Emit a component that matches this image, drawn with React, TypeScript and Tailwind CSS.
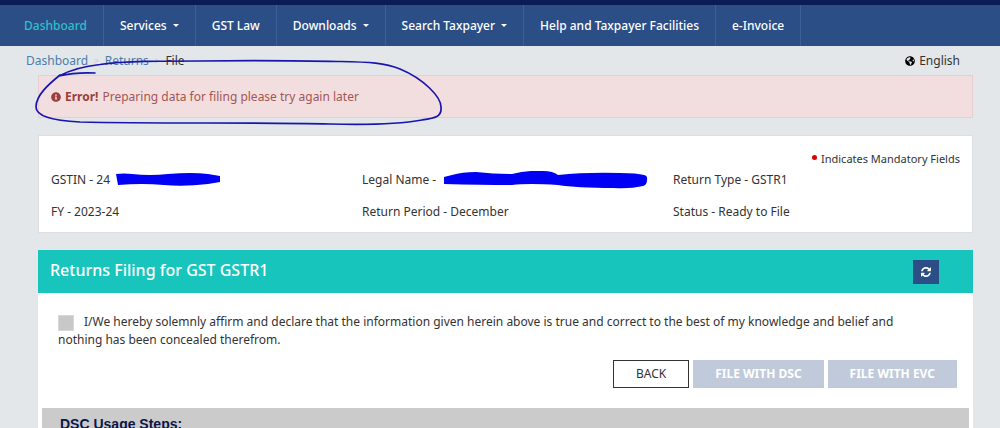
import { FaGlobeAmericas, FaInfoCircle } from "react-icons/fa";

const navItems = [
  { label: "Dashboard", active: true },
  { label: "Services", menu: true },
  { label: "GST Law" },
  { label: "Downloads", menu: true },
  { label: "Search Taxpayer", menu: true },
  { label: "Help and Taxpayer Facilities" },
  { label: "e-Invoice" },
];

function NavBar() {
  return (
    <header className="border-t-[5px] border-[#0b1c57] bg-[#2c4e86]">
      <nav className="flex pl-2 leading-[17px] font-medium text-white">
        {navItems.map((item) => (
          <a
            key={item.label}
            href="#"
            className={`flex items-center gap-1.5 border-r border-[#3d5f96] px-4 py-3 whitespace-nowrap ${
              item.active ? "text-[#2cc0cc]" : ""
            }`}
          >
            {item.label}
            {item.menu && (
              <span className="border-x-[3px] border-t-[3px] border-x-transparent border-t-white" />
            )}
          </a>
        ))}
      </nav>
    </header>
  );
}

function Breadcrumb() {
  return (
    <div className="flex h-[29px] items-center justify-between pr-10 pl-[26px]">
      <nav aria-label="Breadcrumb" className="flex items-center gap-1.5">
        <a href="#" className="text-[#4a7dab]">
          Dashboard
        </a>
        <span className="text-[8px] text-[#c3cad0]">&gt;</span>
        <a href="#" className="text-[#4a7dab]">
          Returns
        </a>
        <span className="text-[8px] text-[#c3cad0]">&gt;</span>
        <span>File</span>
      </nav>
      <button type="button" className="flex items-center gap-1">
        <FaGlobeAmericas className="size-2.5 text-black" />
        English
      </button>
    </div>
  );
}

function ErrorAlert() {
  return (
    <div
      role="alert"
      className="flex h-[43px] items-center gap-1 border border-[#ebccd1] bg-[#f2dede] px-3 text-[#a35654]"
    >
      <FaInfoCircle className="size-2.5 text-[#9c3f3c]" />
      <p className="flex gap-1">
        <strong className="text-[#9c3f3c]">Error!</strong>
        Preparing data for filing please try again later
      </p>
    </div>
  );
}

function ReturnDetails() {
  return (
    <section className="mt-[17px] border border-[#dcdfe1] bg-white pt-[15px] pb-3">
      <p className="flex items-center justify-end gap-1 pr-3 text-[11px] leading-[16px]">
        <span className="mb-1 size-[5px] rounded-full bg-[#dd0000]" />
        Indicates Mandatory Fields
      </p>
      <div className="grid grid-cols-3 gap-y-[15px] pt-1">
        <p className="flex items-center gap-1.5 pl-3">
          GSTIN - 24
          <svg width="105" height="13" viewBox="0 0 105 13" aria-hidden="true">
            <path
              d="M0 1Q8 0 16 1Q34 3 52 1Q76-1 92 1L104 3V9L92 11Q68 14 48 12Q26 10 2 12Z"
              fill="#0000f5"
            />
          </svg>
        </p>
        <p className="flex items-center gap-2 pl-3">
          Legal Name -
          <svg
            width="204"
            height="18"
            viewBox="0 0 204 18"
            className="-my-1"
            aria-hidden="true"
          >
            <path
              d="M0 6L8 4Q18 1 32 1Q50 3 68 3Q84-1 99 0Q109 0 114 4Q142 1 176 2Q193 2 200 4Q204 5 203 9Q203 14 199 15Q186 18 170 17Q132 17 114 14Q84 12 68 14Q40 14 0 13Z"
              fill="#0000f5"
            />
          </svg>
        </p>
        <p className="pl-3">Return Type - GSTR1</p>
        <p className="pl-3">FY - 2023-24</p>
        <p className="pl-3">Return Period - December</p>
        <p className="pl-3">Status - Ready to File</p>
      </div>
    </section>
  );
}

function RefreshIcon() {
  return (
    <svg viewBox="0 0 1536 1536" className="size-2.5 fill-current" aria-hidden="true">
      <path d="M1511 928q0 5-1 7-64 268-268 434.5t-478 166.5q-146 0-282.5-55t-243.5-157l-129 129q-19 19-45 19t-45-19-19-45v-448q0-26 19-45t45-19h448q26 0 45 19t19 45-19 45l-137 137q71 66 161 102t187 36q134 0 250-65t186-179q11-17 53-117 8-23 30-23h192q13 0 22.5 9.5t9.5 22.5zm25-800v448q0 26-19 45t-45 19h-448q-26 0-45-19t-19-45 19-45l138-138q-148-137-349-137-134 0-250 65t-186 179q-11 17-53 117-8 23-30 23h-199q-13 0-22.5-9.5t-9.5-22.5v-7q65-268 270-434.5t480-166.5q146 0 284 55.5t245 156.5l130-129q19-19 45-19t45 19 19 45z" />
    </svg>
  );
}

function FilingPanel() {
  return (
    <section className="mt-[17px] bg-white">
      <div className="flex h-[43px] items-center justify-between bg-[#18c5bd] pr-[34px] pl-3">
        <h1 className="pb-1 text-[16px] leading-[20px] font-medium text-white">
          Returns Filing for GST GSTR1
        </h1>
        <button
          type="button"
          aria-label="Refresh"
          className="flex h-6 w-[26px] items-center justify-center bg-[#2c4e86] text-white"
        >
          <RefreshIcon />
        </button>
      </div>

      <div className="px-5 pt-5">
        <label className="block pr-4 leading-[17px]">
          <input
            type="checkbox"
            className="mr-2.5 size-4 appearance-none border border-[#d8d8d8] bg-[#c8c8c8] align-middle"
          />
          I/We hereby solemnly affirm and declare that the information given
          herein above is true and correct to the best of my knowledge and
          belief and nothing has been concealed therefrom.
        </label>
      </div>

      <div className="mt-3 flex justify-end gap-1 pr-4">
        <button type="button" className="h-7 border border-[#333] bg-white px-[22px]">
          BACK
        </button>
        <button
          type="button"
          disabled
          className="h-7 bg-[#c0cadb] px-[22px] font-bold text-white"
        >
          FILE WITH DSC
        </button>
        <button
          type="button"
          disabled
          className="h-7 bg-[#c0cadb] px-[22px] font-bold text-white"
        >
          FILE WITH EVC
        </button>
      </div>

      <div className="mx-1 mt-5 bg-[#cbcbcb] px-[18px] py-1.5">
        <h2 className="font-['Liberation_Sans',Arial,sans-serif] text-[14px] leading-[20px] font-bold text-[#0b1648]">
          DSC Usage Steps:
        </h2>
      </div>
    </section>
  );
}

// Hand-drawn loop around the error message
function PenCircle() {
  return (
    <svg
      width="450"
      height="130"
      viewBox="0 0 450 130"
      className="pointer-events-none absolute top-0 left-0"
      fill="none"
      stroke="#1a14ae"
      strokeWidth="1.7"
      strokeLinecap="round"
      aria-hidden="true"
    >
      <path d="M95 73Q76 72 59 76Q76 67 100 64.500C125 61 160 61 200 61C270 60 310 61 340 61.500C370 62 385 63 400 69C424 79 441 97 441 107C442 117 435 118 422 120C394 125 365 125 330 124C250 122 160 124 80 122C60 121 36 118 36 107C36 95 49 84 60 75" />
    </svg>
  );
}

export default function App() {
  return (
    <div className="relative h-screen overflow-hidden bg-[#e3e7ea] font-['Noto_Sans',Verdana,sans-serif] text-[12px] leading-[17px] text-[#333]">
      <NavBar />
      <Breadcrumb />
      <main className="pr-[27px] pl-[38px]">
        <ErrorAlert />
        <ReturnDetails />
        <FilingPanel />
      </main>
      <PenCircle />
    </div>
  );
}
